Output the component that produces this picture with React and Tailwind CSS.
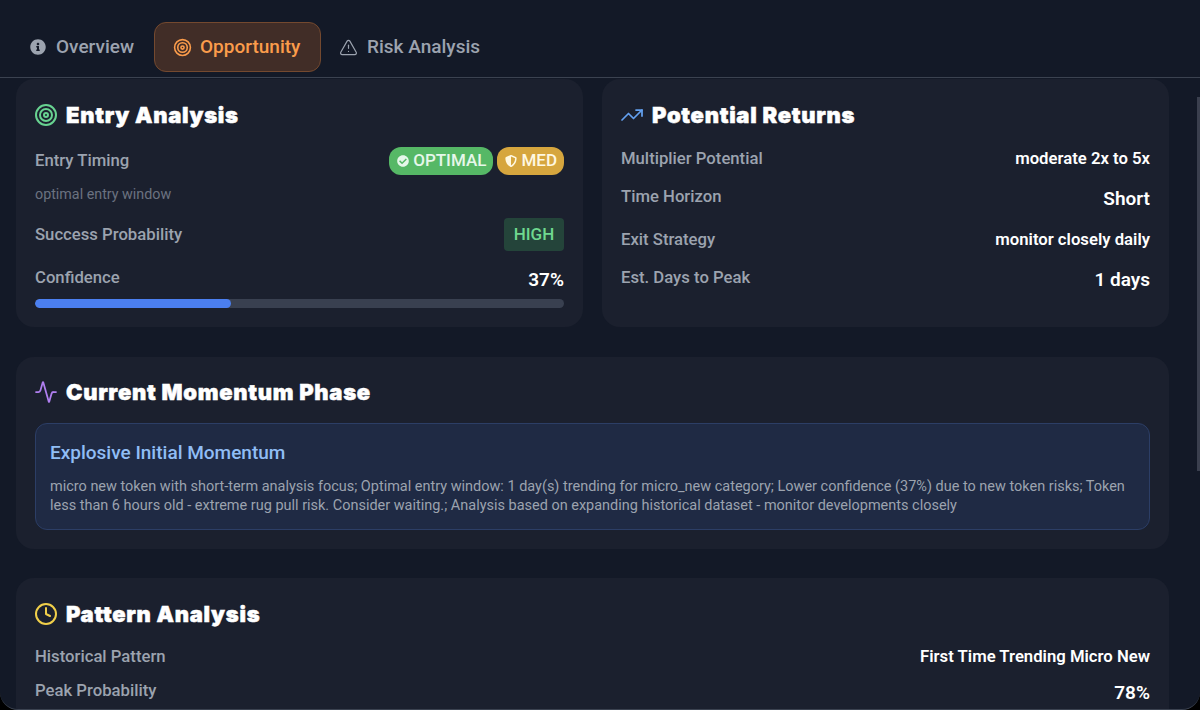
import React from "react";
import { Target, TriangleAlert, TrendingUp, Activity, Clock } from "lucide-react";
import { FaInfoCircle, FaCheckCircle, FaShieldAlt } from "react-icons/fa";

function Row({ label, value, big }) {
  return (
    <div className="flex items-start justify-between">
      <span className="text-[16.7px] leading-[24px] font-medium text-[#9ca3af]">{label}</span>
      <span className={`font-semibold text-white ${big ? "text-[19px] leading-[28px]" : "text-[16.7px] leading-[24px]"}`}>
        {value}
      </span>
    </div>
  );
}

function Heading({ icon, children }) {
  return (
    <div className="flex items-center gap-[8px] h-[32px] ml-[-1px]">
      {icon}
      <h3 className="text-[22px] leading-[32px] font-black tracking-[0.7px] text-white [-webkit-text-stroke:0.5px_white] font-['Inter',sans-serif]">{children}</h3>
    </div>
  );
}

export default function App() {
  return (
    <div className="relative h-[710px] overflow-hidden bg-black font-['Roboto',sans-serif]">
      <div className="h-[710px] overflow-hidden rounded-b-[18px] border-b border-[#3b4250] bg-[#131927]">
        {/* Tabs */}
        <div className="flex h-[78px] items-start border-b border-[#3b4250] pl-[14px] pt-[22px]">
          <button className="flex h-[50px] items-center gap-[10px] px-[16px] text-[19px] font-medium text-[#9ca3af]">
            <FaInfoCircle size={16} />
            Overview
          </button>
          <button className="ml-[4px] flex h-[50px] w-[167px] items-center gap-[8px] rounded-[12px] border border-[#74492f] bg-[#412d27] pl-[18px] text-[19px] font-medium text-[#fb9c4b]">
            <Target size={19} />
            Opportunity
          </button>
          <button className="flex h-[50px] items-center gap-[9px] px-[18px] text-[19px] font-medium text-[#9ca3af]">
            <TriangleAlert size={19} strokeWidth={1.5} />
            Risk Analysis
          </button>
        </div>

        <div className="pl-[16px] pr-[31px] pt-[1px]">
          <div className="grid grid-cols-2 gap-[19px]">
            {/* Entry Analysis */}
            <div className="h-[248px] rounded-[18px] bg-[#1b202e] px-[19px] pt-[20px]">
              <Heading icon={<Target size={24} className="text-[#68d391]" />}>Entry Analysis</Heading>
              <div className="mt-[17px] flex items-start justify-between">
                <span className="mt-[1px] text-[16.7px] leading-[24px] font-medium text-[#9ca3af]">Entry Timing</span>
                <div className="mt-[-1px] flex gap-[4px]">
                  <span className="flex h-[28px] items-center gap-[4px] rounded-[12px] bg-[#56b866] pl-[8px] pr-[7px] text-[17px] font-medium text-[#e6f7ea]">
                    <FaCheckCircle size={12} />
                    OPTIMAL
                  </span>
                  <span className="flex h-[28px] items-center gap-[4px] rounded-[12px] bg-[#d6a63e] pl-[8px] pr-[7px] text-[17px] font-medium text-[#fff8e1]">
                    <FaShieldAlt size={12} />
                    MED
                  </span>
                </div>
              </div>
              <p className="mt-[9px] text-[14.3px] leading-[20px] text-[#6b7280]">optimal entry window</p>
              <div className="mt-[14px] flex items-center justify-between">
                <span className="text-[16.7px] leading-[24px] font-medium text-[#9ca3af]">Success Probability</span>
                <span className="flex h-[33px] w-[60px] items-center justify-center rounded-[4px] bg-[#24443a] text-[17px] font-medium text-[#6fd88f]">
                  HIGH
                </span>
              </div>
              <div className="mt-[15px]">
                <Row label="Confidence" value="37%" big />
              </div>
              <div className="mt-[5px] h-[9px] overflow-hidden rounded-full bg-[#394050]">
                <div className="h-full rounded-full bg-[#4b7ff0]" style={{ width: "37%" }} />
              </div>
            </div>

            {/* Potential Returns */}
            <div className="h-[248px] rounded-[18px] bg-[#1b202e] px-[19px] pt-[20px]">
              <Heading icon={<TrendingUp size={24} strokeWidth={1.75} className="text-[#63a0f0]" />}>Potential Returns</Heading>
              <div className="mt-[16px] flex flex-col">
                <Row label="Multiplier Potential" value="moderate 2x to 5x" />
                <div className="mt-[14px]"><Row label="Time Horizon" value="Short" big /></div>
                <div className="mt-[15px]"><Row label="Exit Strategy" value="monitor closely daily" /></div>
                <div className="mt-[14px]"><Row label="Est. Days to Peak" value="1 days" big /></div>
              </div>
            </div>
          </div>

          {/* Current Momentum Phase */}
          <div className="mt-[30px] h-[192px] rounded-[18px] bg-[#1b202e] px-[19px] pt-[19px]">
            <Heading icon={<Activity size={24} strokeWidth={1.75} className="text-[#b07ff0]" />}>Current Momentum Phase</Heading>
            <div className="mt-[15px] h-[107px] rounded-[12px] border border-[#2c3e66] bg-[#1f2a44] px-[14px] pt-[15px]">
              <h4 className="text-[19px] leading-[28px] font-medium text-[#90bdf5]">Explosive Initial Momentum</h4>
              <p className="mt-[10px] text-[14.48px] leading-[19px] text-[#9ca3af]">
                micro new token with short-term analysis focus; Optimal entry window: 1 day(s) trending for micro_new category; Lower confidence (37%) due to new token risks; Token less than 6 hours old - extreme rug pull risk. Consider waiting.; Analysis based on expanding historical dataset - monitor developments closely
              </p>
            </div>
          </div>

          {/* Pattern Analysis */}
          <div className="mt-[29px] h-[160px] rounded-[18px] bg-[#1b202e] px-[19px] pt-[20px]">
            <Heading icon={<Clock size={24} className="text-[#f0cf4a]" />}>Pattern Analysis</Heading>
            <div className="mt-[15px]"><Row label="Historical Pattern" value="First Time Trending Micro New" /></div>
            <div className="mt-[10px]"><Row label="Peak Probability" value="78%" big /></div>
          </div>
        </div>
      </div>
      {/* Scrollbar thumb */}
      <div className="absolute right-0 top-[97px] h-[374px] w-[3px] bg-[#3a3f4e]" />
    </div>
  );
}
